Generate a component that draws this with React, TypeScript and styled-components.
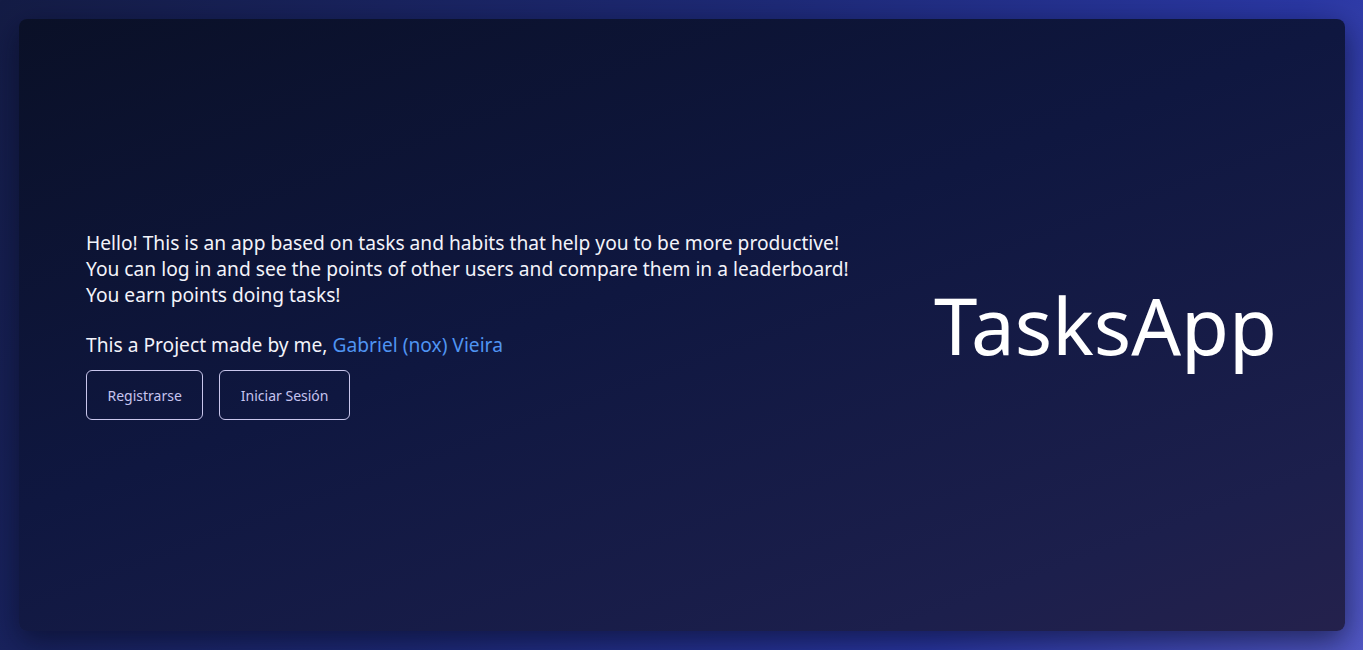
import React from "react";
import styled, { createGlobalStyle } from "styled-components";

const Global = createGlobalStyle`
  html, body { margin: 0; padding: 0; }
  body {
    font-family: "Noto Sans", "Open Sans", sans-serif;
    background: linear-gradient(120deg, #141c45 0%, #1e2a78 45%, #2a37a3 75%, #5258c4 100%);
    min-height: 650px;
  }
`;

const Page = styled.div`
  box-sizing: border-box;
  height: 650px;
  padding: 19px 18px 19px 19px;
  display: flex;
`;

const Card = styled.main`
  flex: 1;
  border-radius: 8px;
  background: linear-gradient(160deg, #0a1027 0%, #0f1740 45%, #1c1f4c 85%, #24214c 100%);
  box-shadow: 0 10px 30px rgba(5, 8, 30, 0.6);
  display: flex;
  align-items: center;
  justify-content: space-between;
  padding: 0 68px 0 67px;
`;

const Intro = styled.section`
  display: flex;
  flex-direction: column;
`;

const Text = styled.p`
  margin: 0;
  color: #f3f3fa;
  font-size: 19.2px;
  line-height: 26px;
`;

const Credit = styled(Text)`
  margin-top: 24px;
`;

const Link = styled.a`
  color: #4f94f2;
  text-decoration: none;
`;

const Actions = styled.div`
  display: flex;
  gap: 16px;
  margin-top: 12px;
`;

const Button = styled.button`
  font-family: "Noto Sans", "Open Sans", sans-serif;
  font-size: 14px;
  color: #c6c4ef;
  background: transparent;
  border: 1px solid #c9c6ec;
  border-radius: 6px;
  height: 50px;
  padding: 0 20.5px;
  cursor: pointer;
`;

const Title = styled.h1`
  margin: 0;
  color: #ffffff;
  font-weight: 400;
  font-size: 78px;
  line-height: 1;
`;

export default function App() {
  return (
    <>
      <Global />
      <Page>
        <Card>
          <Intro>
            <Text>
              Hello! This is an app based on tasks and habits that help you to be more productive!
              <br />
              You can log in and see the points of other users and compare them in a leaderboard!
              <br />
              You earn points doing tasks!
            </Text>
            <Credit>
              This a Project made by me, <Link href="#">Gabriel (nox) Vieira</Link>
            </Credit>
            <Actions>
              <Button>Registrarse</Button>
              <Button>Iniciar Sesión</Button>
            </Actions>
          </Intro>
          <Title>TasksApp</Title>
        </Card>
      </Page>
    </>
  );
}
